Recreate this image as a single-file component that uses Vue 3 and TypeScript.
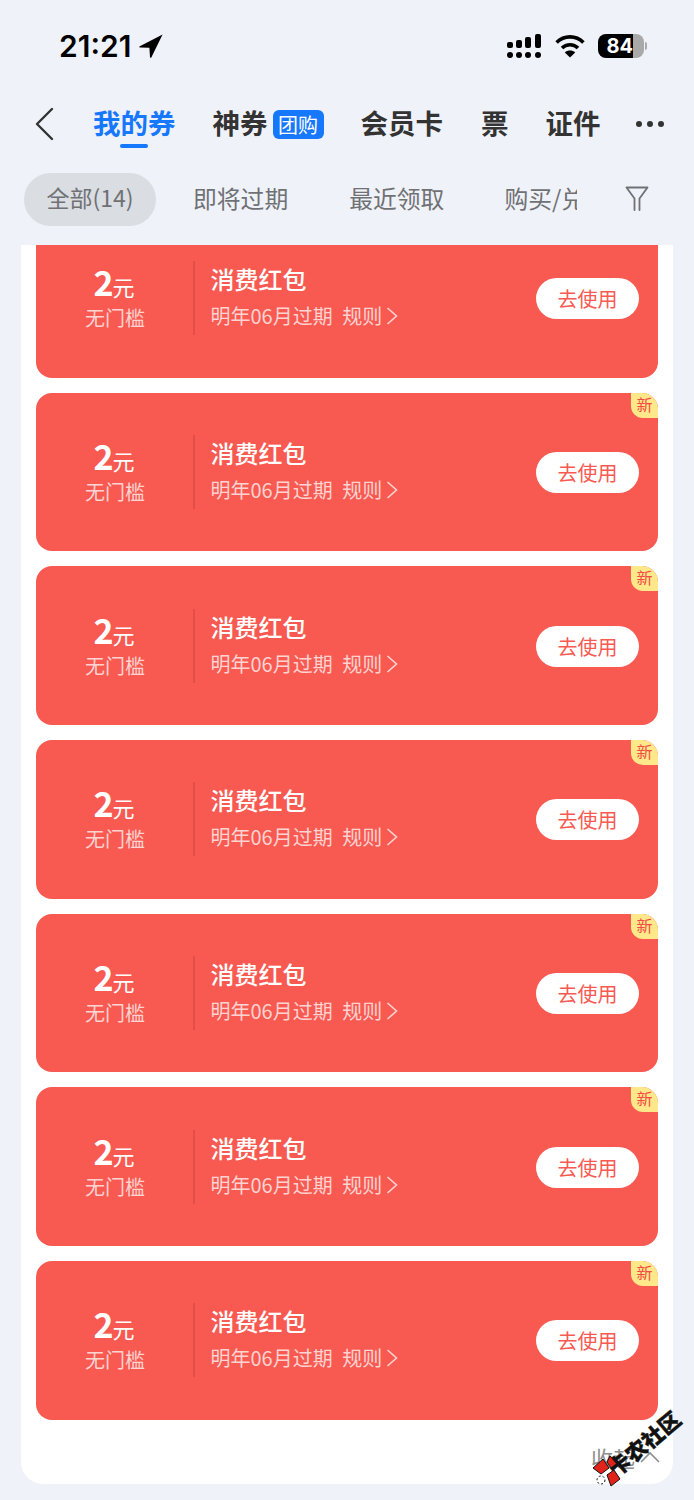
<script setup lang="ts">
const cards: { isNew: boolean; first: boolean }[] = Array.from({ length: 7 }, (_, i) => ({
  isNew: i > 0,
  first: i === 0,
}));
</script>

<template>
  <div class="page">
    <div class="status">
      <span class="time">21:21</span>
      <svg class="loc" width="24" height="24" viewBox="0 0 24 24"><path d="M23.6.6 .8 12.2c-.7.4-.5 1.3.3 1.3L10.4 13.7 11 23.2c.1.7 1 .8 1.3.2L23.6.6Z" fill="#000" /></svg>
      <span class="spring"></span>
      <svg class="signal" width="35" height="24" viewBox="0 0 35 24">
        <g fill="#000">
          <rect x="0" y="8" width="6" height="6" rx="2" /><rect x="9" y="6" width="6" height="8" rx="2" /><rect x="18" y="3" width="6" height="11" rx="2" /><rect x="28" y="0" width="6" height="14" rx="2" />
          <circle cx="3" cy="21" r="3" /><circle cx="12" cy="21" r="3" /><circle cx="21" cy="21" r="3" /><circle cx="31" cy="21" r="3" />
        </g>
      </svg>
      <svg class="wifi" width="30" height="24" viewBox="0 0 30 24">
        <g fill="none" stroke="#000" stroke-width="3.6">
          <path d="M1.6 8.4C9 1 21 1 28.4 8.4" /><path d="M7 14c4.4-4.4 11.6-4.4 16 0" />
        </g>
        <path d="M15 23.4 9.8 18.4c2.9-2.6 7.5-2.6 10.4 0L15 23.4Z" fill="#000" />
      </svg>
      <div class="battery">
        <span class="b-fill">84</span><span class="b-rest"></span>
      </div>
      <span class="b-nub"></span>
    </div>

    <nav class="tabs">
      <svg class="back" width="20" height="34" viewBox="0 0 20 34"><path d="M18 2 3 17l15 15" fill="none" stroke="#333" stroke-width="2.4" stroke-linecap="round" stroke-linejoin="round" /></svg>
      <div class="tab active">我的券<i class="bar"></i></div>
      <div class="tab t2">神券</div>
      <span class="tuan">团购</span>
      <div class="tab t3">会员卡</div>
      <div class="tab t4">票</div>
      <div class="tab t5">证件</div>
      <div class="dots"><i></i><i></i><i></i></div>
    </nav>

    <div class="chips">
      <span class="chip on">全部(14)</span>
      <span class="chip c2">即将过期</span>
      <span class="chip c3">最近领取</span>
      <span class="chip c4"><span>购买/兑换</span></span>
      <svg class="filter" width="24" height="26" viewBox="0 0 24 26"><path d="M1.5 1.5h21l-8 11v11.5M9.5 24V12.5l-8-11" fill="none" stroke="#6f7175" stroke-width="1.8" stroke-linejoin="round" stroke-linecap="round" /></svg>
    </div>

    <main class="panel">
      <div class="list">
        <section v-for="(c, i) in cards" :key="i" class="card" :class="{ first: c.first }">
          <div class="amount">
            <div class="val"><b>2</b><span>元</span></div>
            <div class="limit">无门槛</div>
          </div>
          <div class="info">
            <div class="title">消费红包</div>
            <div class="sub">明年06月过期 <span class="rule">规则</span>
              <svg width="12" height="20" viewBox="0 0 12 20"><path d="M1.5 2 10.5 10 1.5 18" fill="none" stroke="#ffd3d0" stroke-width="1.6" /></svg>
            </div>
          </div>
          <button class="use">去使用</button>
          <span v-if="c.isNew" class="new">新</span>
        </section>
      </div>
      <div class="fold">
        <span>收起</span>
        <svg width="22" height="14" viewBox="0 0 22 14"><path d="M2 12 11 3l9 9" fill="none" stroke="#8d8d8d" stroke-width="1.6" /></svg>
      </div>
    </main>

    <div class="mark">
      <svg class="mark-logo" width="32" height="32" viewBox="0 0 32 32">
        <g stroke="#111" stroke-width="1">
          <path d="M1 13 11 4l6 9-8 6Z" fill="#e2231a" />
          <path d="M18 1l8 7-7 5-4-6Z" fill="#e2231a" />
          <path d="M15 20l7-5 6 9-9 7Z" fill="#e2231a" />
        </g>
        <circle cx="9" cy="25" r="4" fill="#fff" stroke="#111" stroke-width="1" stroke-dasharray="2 2" />
      </svg>
      <span class="mark-text">卡农社区</span>
    </div>
  </div>
</template>

<style>
html, body { margin: 0; background: #eff2f8; }
</style>

<style scoped>
.page {
  position: relative;
  width: 694px;
  height: 1500px;
  overflow: hidden;
  background: #eff2f8;
  font-family: "Noto Sans CJK SC", "Noto Sans", sans-serif;
}
.status {
  display: flex;
  align-items: center;
  height: 24px;
  padding: 34px 47px 0 59px;
}
.time {
  font-family: Inter, "Liberation Sans", sans-serif;
  font-size: 30px;
  font-weight: 600;
  line-height: 24px;
  color: #000;
}
.loc { margin-left: 8px; }
.spring { flex: 1; }
.wifi { margin-left: 13px; }
.battery {
  display: flex;
  width: 46px;
  height: 24px;
  margin-left: 13px;
  border-radius: 8px;
  overflow: hidden;
}
.b-fill {
  flex: 0 0 35px;
  background: #000;
  color: #fff;
  font-family: Inter, "Liberation Sans", sans-serif;
  font-size: 20px;
  font-weight: 700;
  line-height: 24px;
  text-align: right;
}
.b-rest { flex: 1; background: #a9a9a9; }
.b-nub {
  width: 2px;
  height: 8px;
  margin-left: 1px;
  background: #a9a9a9;
  border-radius: 0 2px 2px 0;
}
.tabs {
  display: flex;
  align-items: center;
  height: 40px;
  margin-top: 46px;
  padding-left: 34px;
}
.tab {
  position: relative;
  font-size: 27.5px;
  line-height: 37px;
  height: 40px;
  font-weight: 700;
  color: #333;
  white-space: nowrap;
}
.active { margin-left: 39px; color: #1677ff; }
.bar {
  position: absolute;
  left: 27px;
  top: 40px;
  width: 28px;
  height: 4px;
  border-radius: 2px;
  background: #1677ff;
}
.t2 { margin-left: 37px; }
.tuan {
  width: 51px;
  height: 29px;
  margin-left: 5px;
  border-radius: 6px;
  background: #1677ff;
  color: #fff;
  font-size: 20px;
  line-height: 29px;
  text-align: center;
}
.t3 { margin-left: 37px; }
.t4 { margin-left: 38px; }
.t5 { margin-left: 37px; }
.dots { display: flex; gap: 5px; margin-left: 35px; }
.dots i { width: 6px; height: 6px; border-radius: 50%; background: #333; }
.chips {
  display: flex;
  align-items: center;
  height: 53px;
  margin-top: 29px;
  padding-left: 24px;
}
.chip {
  font-size: 23.8px;
  line-height: 49px;
  height: 53px;
  color: #6f7175;
  white-space: nowrap;
}
.on {
  width: 132px;
  border-radius: 26.5px;
  background: #dadde2;
  font-size: 23px;
  text-align: center;
}
.c2 { margin-left: 37px; }
.c3 { margin-left: 61px; }
.c4 { margin-left: 60px; width: 73px; overflow: hidden; }
.filter { margin-left: 48px; margin-top: -2px; }
.panel {
  position: relative;
  width: 652px;
  height: 1239px;
  margin: 19px 0 0 21px;
  overflow: hidden;
  background: #fff;
  border-radius: 0 0 22px 22px;
}
.list {
  display: flex;
  flex-direction: column;
  gap: 15px;
  margin: -26px 15px 0;
}
.card {
  position: relative;
  display: flex;
  align-items: center;
  height: 158.67px;
  flex: none;
  overflow: hidden;
  border-radius: 16px;
  background: #f85a52;
  color: #fff;
}
.amount {
  width: 157px;
  padding-left: 1px;
  box-sizing: border-box;
  text-align: center;
}
.val {
  display: flex;
  align-items: baseline;
  justify-content: center;
  height: 38px;
  margin-top: 1px;
  line-height: 34px;
}
.val b { font-size: 34px; font-weight: 700; margin-left: -2px; }
.val span { font-size: 22px; margin-left: -1px; }
.limit {
  margin-top: 1px;
  font-size: 20px;
  line-height: 28px;
  color: #ffd3d0;
}
.info {
  flex: 1;
  height: 74px;
  padding-left: 15.5px;
  border-left: 2px solid #e54e48;
}
.title {
  margin-top: -1px;
  font-size: 24px;
  font-weight: 500;
  line-height: 38px;
}
.sub {
  display: flex;
  align-items: center;
  margin-top: 2px;
  font-size: 20px;
  line-height: 32px;
  color: #ffd3d0;
  white-space: pre;
}
.rule { margin-left: 5px; }
.sub svg { margin-left: 4px; }
.use {
  width: 103px;
  height: 41px;
  margin: 1px 19px 0 0;
  padding: 0;
  border: 0;
  border-radius: 20.5px;
  background: #fff;
  color: #f85a52;
  font-family: inherit;
  font-size: 20px;
  line-height: 41px;
}
.new {
  position: absolute;
  top: 0;
  right: 0;
  width: 27px;
  height: 25px;
  border-bottom-left-radius: 12px;
  background: #ffe88a;
  color: #f24b45;
  font-size: 16px;
  line-height: 23px;
  text-align: center;
}
.fold {
  display: flex;
  align-items: center;
  gap: 4px;
  position: absolute;
  left: 570px;
  top: 1197px;
  color: #8d8d8d;
  font-size: 22px;
  line-height: 30px;
}
.mark {
  position: absolute;
  left: 590px;
  top: 1405px;
  width: 100px;
  height: 85px;
}
.mark-logo { position: absolute; left: 2px; top: 50px; }
.mark-text {
  position: absolute;
  left: 11px;
  top: 25px;
  transform: rotate(-40deg);
  font-family: "Noto Sans CJK SC", sans-serif;
  font-size: 21.5px;
  font-weight: 900;
  line-height: 26px;
  white-space: nowrap;
  color: #111;
  -webkit-text-stroke: 0.4px #111;
}
</style>
